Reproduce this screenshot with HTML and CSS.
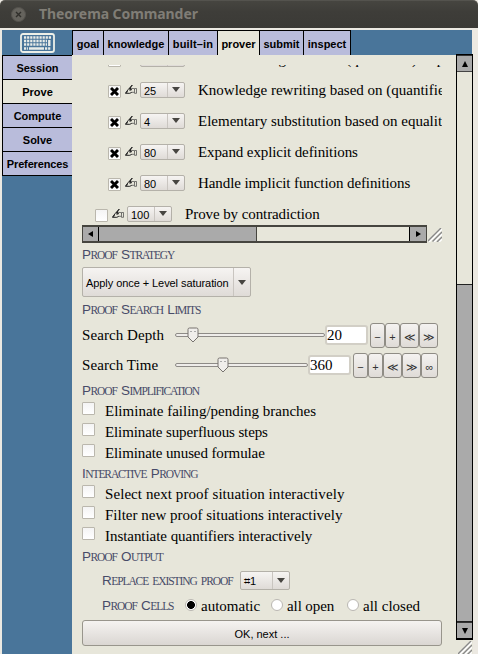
FILE: index.html
```html
<!DOCTYPE html>
<html lang="en">
<head>
<meta charset="utf-8">
<title>Theorema Commander</title>
<link rel="stylesheet" href="styles.css">
</head>
<body>
<svg width="0" height="0" class="defs">
  <symbol id="hand" viewBox="0 0 12 11"><path d="M.3 9.3 3.2 5.5 7.3 1M7.3 1 4.2 5.2 6.3 4 4.8 6.3 7 5.5M.3 9.3H4.8L6.8 8.3M2.5 6.8 1.5 9" fill="none" stroke="#222" stroke-width="1"/><path d="M7 4.5H8.8L9.5 5.5M6.8 8.3H9M9.5 4.5H11.5V9.3H9.5Z" fill="none" stroke="#444" stroke-width=".7"/></symbol>
  <symbol id="cross" viewBox="0 0 9 9"><path d="M1 1 8 8M8 1 1 8" stroke="#000" stroke-width="2.9"/></symbol>
  <symbol id="grip" viewBox="0 0 14 14"><path d="M1 14 14 1M6 14 14 6M11 14 14 11" stroke="#fff" stroke-width="1.6"/><path d="M0 13 13 0M4.5 13.5 14 4M9 14 14 9" stroke="#888" stroke-width="1.4"/></symbol>
  <symbol id="thumb" viewBox="0 0 12 16"><path d="M2.5 1H9.5Q11 1 11 2.5V10L6 15 1 10V2.5Q1 1 2.5 1Z" fill="#f0eeeb" stroke="#77736f"/><path d="M3 4.5H5M7 4.5H9" stroke="#aaa"/></symbol>
</svg>
<header class="title"><span class="close"><svg width="7" height="7" viewBox="0 0 7 7"><path d="M1 1 6 6M6 1 1 6" stroke="#302f2b" stroke-width="1.4"/></svg></span><span class="name">Theorema Commander</span></header>
<div class="window">
  <aside class="side">
    <div class="logo"><svg width="35" height="20" viewBox="0 0 35 20"><rect x="1" y="1" width="33" height="18" rx="2" fill="#49759a" stroke="#edf0e8" stroke-width="1.8"/><path d="M4 4.5H31M4 8H27M4 11.5H27M4 15.5H8M25 15.5H31" stroke="#e8ece8" stroke-width="2.4" stroke-dasharray="2.2 .9"/><path d="M9 15.5H24M29.3 7V13" stroke="#e8ece8" stroke-width="2.4"/></svg></div>
    <div class="nav">Session</div>
    <div class="nav on">Prove</div>
    <div class="nav">Compute</div>
    <div class="nav">Solve</div>
    <div class="nav last">Preferences</div>
  </aside>
  <div class="body">
    <nav class="tabs"><div class="tab w1">goal</div><div class="tab w2">knowledge</div><div class="tab w3">built–in</div><div class="tab w4 on">prover</div><div class="tab w5">submit</div><div class="tab w6">inspect</div></nav>
    <div class="content">
      <main class="panel">
        <div class="list">
          <div class="rule"><i class="check"><svg><use href="#cross"/></svg></i><svg class="hand"><use href="#hand"/></svg><div class="drop"><b>30</b><i></i></div><span class="serif r0">Goal rewriting based on (quantified) implications</span></div>
          <div class="rule"><i class="check"><svg><use href="#cross"/></svg></i><svg class="hand"><use href="#hand"/></svg><div class="drop"><b>25</b><i></i></div><span class="serif r1">Knowledge rewriting based on (quantified) implications</span></div>
          <div class="rule"><i class="check"><svg><use href="#cross"/></svg></i><svg class="hand"><use href="#hand"/></svg><div class="drop"><b>4</b><i></i></div><span class="serif r2">Elementary substitution based on equalities</span></div>
          <div class="rule"><i class="check"><svg><use href="#cross"/></svg></i><svg class="hand"><use href="#hand"/></svg><div class="drop"><b>80</b><i></i></div><span class="serif r3">Expand explicit definitions</span></div>
          <div class="rule"><i class="check"><svg><use href="#cross"/></svg></i><svg class="hand"><use href="#hand"/></svg><div class="drop"><b>80</b><i></i></div><span class="serif r4">Handle implicit function definitions</span></div>
          <div class="rule outer"><i class="check"></i><svg class="hand"><use href="#hand"/></svg><div class="drop"><b>100</b><i></i></div><span class="serif r5">Prove by contradiction</span></div>
        </div>
        <div class="hrow"><div class="hscroll"><div class="hb"><i class="al"></i></div><div class="ht"></div><div class="hg"></div><div class="hb r"><i class="ar"></i></div></div><svg class="grip"><use href="#grip"/></svg></div>
        <h2 class="h1"><b>P</b>roof <b>S</b>trategy</h2>
        <div class="drop big"><b>Apply once + Level saturation</b><i></i></div>
        <h2 class="h2"><b>P</b>roof <b>S</b>earch <b>L</b>imits</h2>
        <div class="limit"><span class="serif lab depth">Search Depth</span><div class="track t1"><svg class="thumb"><use href="#thumb"/></svg></div><div class="field serif">20</div><div class="btns"><div class="n">−</div><div class="n">+</div><div>≪</div><div>≫</div></div></div>
        <div class="limit"><span class="serif lab time">Search Time</span><div class="track t2"><svg class="thumb"><use href="#thumb"/></svg></div><div class="field serif">360</div><div class="btns"><div class="n">−</div><div class="n">+</div><div>≪</div><div>≫</div><div class="inf">∞</div></div></div>
        <h2 class="h3"><b>P</b>roof <b>S</b>implification</h2>
        <div class="opt"><i class="check"></i><span class="serif o1">Eliminate failing/pending branches</span></div>
        <div class="opt"><i class="check"></i><span class="serif o2">Eliminate superfluous steps</span></div>
        <div class="opt"><i class="check"></i><span class="serif o3">Eliminate unused formulae</span></div>
        <h2 class="h4"><b>I</b>nteractive <b>P</b>roving</h2>
        <div class="opt"><i class="check"></i><span class="serif o4">Select next proof situation interactively</span></div>
        <div class="opt"><i class="check"></i><span class="serif o5">Filter new proof situations interactively</span></div>
        <div class="opt"><i class="check"></i><span class="serif o6">Instantiate quantifiers interactively</span></div>
        <h2 class="h5"><b>P</b>roof <b>O</b>utput</h2>
        <div class="sub"><h2 class="h6"><b>R</b>eplace existing proof</h2><div class="drop hash"><b>⌗1</b><i></i></div></div>
        <div class="sub cells"><h2 class="h7"><b>P</b>roof <b>C</b>ells</h2><i class="radio on"></i><span class="serif c1">automatic</span><i class="radio"></i><span class="serif c2">all open</span><i class="radio"></i><span class="serif c3">all closed</span></div>
        <div class="ok">OK, next ...</div>
      </main>
      <div class="vcol"><div class="vscroll"><div class="vb"><i class="au"></i></div><div class="vg"></div><div class="vt"></div><div class="vb"><i class="ad"></i></div></div><svg class="grip"><use href="#grip"/></svg></div>
    </div>
  </div>
</div>
</body>
</html>
```

FILE: styles.css
```css
* { box-sizing: border-box; }
body { margin: 0; width: 478px; height: 654px; overflow: hidden; background: #ece9e2; font-family: "Liberation Sans", Arial, sans-serif; color: #000; }
i, b { font-style: normal; font-weight: normal; }
.defs { position: absolute; }
.title { height: 28px; background: linear-gradient(#464540 0, #3e3d39 40%, #3b3a36); border-top: 1px solid #54534e; border-radius: 5px 5px 0 0; display: flex; align-items: center; padding-left: 11px; }
.close { width: 15px; height: 15px; border-radius: 50%; background: #65635d; display: flex; align-items: center; justify-content: center; border: 1px solid #55534e; }
.name { font: bold 14px/20px "Noto Sans", sans-serif; color: #807d76; margin: -1px 0 0 13px; white-space: nowrap; letter-spacing: -.08px; }
.window { display: flex; margin: 2px 0 0 2px; width: 471px; height: 624px; }
.side { width: 70px; background: #49759a; flex: none; }
.logo { height: 25px; display: flex; align-items: center; justify-content: center; }
.nav { height: 24px; border: solid #000; border-width: 1px 0 0 1px; background: #b9bcdb; font-weight: bold; font-size: 11px; line-height: 25px; text-align: center; }
.nav.last { height: 25px; border-bottom-width: 1px; letter-spacing: -.15px; }
.nav.on, .tab.on { background: #e7e6da; }
.body { flex: 1; min-width: 0; }
.tabs { height: 25px; background: #49759a; display: flex; width: 400px; }
.tab { border: solid #000; border-width: 1px 0 0 1px; background: #b9bcdb; font-weight: bold; font-size: 11px; line-height: 27px; text-align: center; white-space: nowrap; }
.w1 { width: 31px; } .w2 { width: 65px; } .w3 { width: 49px; } .w4 { width: 42px; } .w5 { width: 44px; } .w6 { width: 48px; border-right-width: 1px; }
.tab.w3 { letter-spacing: .15px; }
.content { display: flex; height: 599px; width: 401px; background: #e7e6da; }
.panel { width: 384px; padding: 10px 0 0 10px; }
.serif { font: 15px/20px "Liberation Serif", "Times New Roman", serif; white-space: pre; }
.list { width: 360px; height: 157px; overflow: hidden; display: flex; flex-direction: column; }
.rule { display: flex; align-items: center; height: 31px; flex: none; padding-left: 26px; }
.rule:first-child { margin-top: -22px; }
.rule.outer { padding-left: 13px; }
.check { display: flex; align-items: center; justify-content: center; width: 13px; height: 13px; flex: none; border: 1px solid #bab7ad; border-radius: 1px; background: linear-gradient(#f4f4f4, #fff); }
.rule .check { margin-top: 3px; }
.check svg { width: 9px; height: 9px; }
.hand { width: 12px; height: 11px; margin-left: 4px; flex: none; }
.drop { display: flex; width: 45px; height: 16px; margin-left: 3px; flex: none; border: 1px solid #b4b1a9; border-radius: 2px; background: linear-gradient(#f6f4f2, #dfdbd7); }
.drop b { flex: 1; font-size: 11px; line-height: 16px; height: 12px; overflow: hidden; padding-left: 3px; white-space: nowrap; }
.drop > i { width: 17px; flex: none; border-left: 1px solid #c9c5c0; display: flex; align-items: center; justify-content: center; }
.drop > i::before { content: ""; border: solid transparent; border-width: 5px 4px 0; border-top-color: #474541; }
.rule .serif { margin-left: 13px; }
.r3 { letter-spacing: -.1px; } .r4, .r5 { letter-spacing: -.09px; }
.hrow { display: flex; height: 18px; margin-top: 3px; }
.hscroll { width: 345px; display: flex; border: 1px solid #46453f; border-width: 2px 1px; }
.hb { width: 16px; background: #aaa; border-right: 1px solid #000; display: flex; align-items: center; justify-content: center; }
.hb.r { border: 0; }
.ht { width: 158px; background: #aaa; border-right: 1px solid #46453f; }
.hg { flex: 1; border-right: 1px solid #000; }
.al, .ar, .au, .ad { border: 3px solid transparent; }
.al { border-right: 5px solid #000; border-left: 0; } .ar { border-left: 5px solid #000; border-right: 0; }
.au { border-bottom: 6px solid #000; border-top: 0; } .ad { border-top: 6px solid #000; border-bottom: 0; }
.grip { width: 14px; height: 14px; margin: 3px 0 0 1px; }
h2 { margin: 0; font: 11.5px/18px "Liberation Serif", "Times New Roman", serif; color: #474b68; text-transform: uppercase; letter-spacing: -1.1px; white-space: nowrap; word-spacing: 2.5px; height: 18px; }
h2 b { font: 13.5px/14px "Liberation Sans", Arial, sans-serif; letter-spacing: -.5px; }
.h1 { margin-top: 3px; }
.big { width: 169px; height: 30px; margin: 3px 0 0; }
.big b { font-size: 11px; line-height: 30px; height: 28px; letter-spacing: -.07px; }
.h2 { margin-top: 4px; height: 19px; }
.limit { display: flex; align-items: center; height: 30px; width: 356px; }
.lab { width: 93px; letter-spacing: .08px; }
.track { height: 4px; border: 1px solid #8e8b87; border-radius: 2px; background: #efedea; display: flex; align-items: center; }
.t1 { width: 150px; } .t2 { width: 133px; }
.thumb { width: 12px; height: 16px; margin-left: 11px; flex: none; }
.t2 .thumb { margin-left: 41px; }
.field { width: 43px; height: 20px; border: 2px solid #d2cfc6; background: #fff; border-radius: 3px; line-height: 17px; }
.btns { display: flex; margin-left: auto; }
.btns div { width: 19px; height: 25px; border: 1px solid #8f8c85; border-radius: 3px; background: linear-gradient(#f4f2f0, #dfdbd7); font-size: 11px; line-height: 26px; text-align: center; color: #333; }
.btns .n { width: 15px; }
.btns .inf { width: 17px; }
.h3 { height: 20px; margin-top: 2px; }
.opt { display: flex; height: 21px; }
.opt .serif { margin: -1px 0 0 10px; }
.o1 { letter-spacing: .01px; } .o2, .o3 { letter-spacing: -.11px; } .o4 { letter-spacing: .07px; } .o6 { letter-spacing: -.05px; }
.h4, .h5 { height: 20px; line-height: 19px; }
.sub { display: flex; align-items: center; height: 25px; padding-left: 20px; }
.h6 { width: 128px; }
.hash { width: 50px; height: 19px; margin: 0 0 0 10px; }
.hash b { height: 17px; line-height: 19px; font-family: "Liberation Sans", "DejaVu Sans", sans-serif; }
.radio { width: 12px; height: 12px; border: 1px solid #bab7b2; border-radius: 50%; background: #fff; flex: none; display: block; margin-top: -1px; }
.radio.on { background: radial-gradient(circle, #000 0 3.6px, #fff 4.2px); }
.cells .serif { margin-left: 4px; }
.c1 { width: 70px; } .c2 { width: 60px; letter-spacing: -.1px; }
.h7 { width: 83px; }
.ok { width: 360px; height: 26px; margin-top: 2px; border: 1px solid #98958c; border-radius: 3px; background: linear-gradient(#f5f3f1, #dad6d2); font-size: 11px; line-height: 27px; text-align: center; }
.vcol { width: 17px; }
.vscroll { height: 586px; margin-top: -1px; border: 1px solid #000; display: flex; flex-direction: column; border-bottom-width: 2px; position: relative; }
.vb { height: 16px; background: #aaa; display: flex; align-items: center; justify-content: center; border-top: 1px solid #333; }
.vg { height: 213px; border-top: 1px solid #444; background: #e7e6da; }
.vt { flex: 1; background: #aaa; border: solid #222; border-width: 1px 0; }
.vcol .grip { margin: 1px 0 0 2px; display: block; }
```
